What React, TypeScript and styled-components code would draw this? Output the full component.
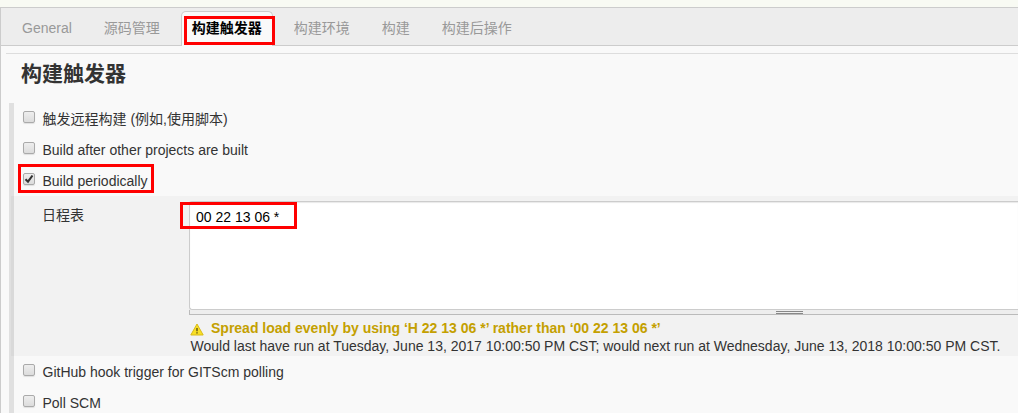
import React from 'react';
import styled, { createGlobalStyle, css } from 'styled-components';

const Global = createGlobalStyle`
  *, *::before { box-sizing: border-box; }
  html, body { margin: 0; height: 413px; overflow: hidden; }
  body {
    background: #f8faf3;
    color: #333;
    font: 14px/20px "Liberation Sans", "Noto Sans CJK SC", sans-serif;
  }
`;

const Page = styled.main`
  height: 413px;
  padding-top: 7px;
  overflow: hidden;
`;

const Panel = styled.div`
  height: 420px;
  border: solid #ccc;
  border-width: 1px 0 0 1px;
  background: #f9f9f9;
`;

const TabBar = styled.nav`
  display: flex;
  align-items: flex-end;
  height: 38px;
  padding: 0 10px;
  gap: 10px;
  background: #ededed;
  box-shadow: inset 0 -1px #ccc;
`;

const Tab = styled.a<{ $active?: boolean }>`
  position: relative;
  height: 35px;
  padding: 6px 10px 0;
  border: 1px solid transparent;
  border-bottom: 0;
  color: #999;
  white-space: nowrap;
  ${(p) =>
    p.$active &&
    css`
      border-color: #ccc;
      border-radius: 5px 5px 0 0;
      background: #f9f9f9;
      color: #000;
      font-weight: bold;
    `}
`;

const Mark = styled.span<{ $x: number; $y: number; $w: number; $h: number }>`
  position: absolute;
  z-index: 1;
  left: ${(p) => p.$x}px;
  top: ${(p) => p.$y}px;
  width: ${(p) => p.$w}px;
  height: ${(p) => p.$h}px;
  border: 3px solid #f00;
  pointer-events: none;
`;

const Content = styled.section`
  margin: 7px 0 0 5px;
  border-top: 1px solid #ddd;
`;

const Heading = styled.h1`
  height: 49px;
  margin: 0;
  padding: 5px 0 0 15px;
  font-size: 21px;
  line-height: 30px;
`;

const Options = styled.div`
  margin-left: 3px;
  border-left: 5px solid #e0e0e0;
`;

const Row = styled.label`
  position: relative;
  display: flex;
  height: 31px;
  padding: 6px 0 0 9px;
  gap: 7.5px;
`;

const CheckBox = styled.span`
  display: flex;
  width: 12px;
  height: 12px;
  margin-top: 2px;
  border: 1px solid #aaa;
  border-radius: 2px;
  background: linear-gradient(#eee, #dcdcdc);
  box-shadow: 0 1px 1px rgba(0, 0, 0, 0.1);
`;

const Schedule = styled.div`
  display: flex;
  height: 160px;
  margin-left: -3px;
  border-left: 3px solid #d9d9d9;
  background: #f2f2f2;
`;

const FieldName = styled.div`
  flex: 0 0 175px;
  padding: 9px 0 0 28px;
`;

const Field = styled.div`
  position: relative;
  flex: 1;
`;

const Editor = styled.div`
  height: 109px;
  margin-top: 5px;
  padding: 5px 6px 0;
  border: 1px solid #ccc;
  border-right: 0;
  border-radius: 3px 0 0 3px;
  background: #fff;
  box-shadow: inset 0 1px 1px rgba(0, 0, 0, 0.09);
  color: #000;
`;

const Grip = styled.div`
  display: flex;
  height: 5px;
  padding: 1px 0 0 586px;
  border: solid #bbb;
  border-width: 0 0 1px 1px;
  background: #eee;

  &::before {
    content: '';
    width: 27px;
    height: 3px;
    border: solid #888;
    border-width: 1px 0;
  }
`;

const Warning = styled.div`
  display: flex;
  height: 18px;
  margin-top: 4px;
  padding-left: 1px;
  gap: 7px;
  color: #c4a000;
  font-weight: bold;
  line-height: 18px;

  svg { margin-top: 4px; }
`;

const RunTimes = styled.div`
  padding-left: 1.5px;
  line-height: 18px;
  white-space: nowrap;
`;

const TABS = ['General', '源码管理', '构建触发器', '构建环境', '构建', '构建后操作'];

function Option({ text, checked }: { text: string; checked?: boolean }) {
  return (
    <Row>
      <CheckBox>
        {checked && (
          <svg width="10" height="10" viewBox="0 0 10 10">
            <path d="M1.5 5.2 4 7.7 8.5 1.5" fill="none" stroke="#333" strokeWidth="2.1" />
          </svg>
        )}
      </CheckBox>
      <span>{text}</span>
      {checked && <Mark $x={4} $y={-1} $w={136} $h={29} />}
    </Row>
  );
}

function WarningIcon() {
  return (
    <svg width="14" height="13" viewBox="0 0 14 13">
      <path d="M7 1 13.2 12H.8Z" fill="#f8df25" stroke="#d8ba18" strokeLinejoin="round" />
      <path d="M7 5v3.2M7 9.2v1.3" fill="none" stroke="#6b5a10" strokeWidth="1.5" />
    </svg>
  );
}

export default function App() {
  return (
    <>
      <Global />
      <Page>
        <Panel>
          <TabBar>
            {TABS.map((name, i) => (
              <Tab key={name} $active={i === 2}>
                {name}
                {i === 2 && <Mark $x={2} $y={4} $w={91} $h={29} />}
              </Tab>
            ))}
          </TabBar>
          <Content>
            <Heading>构建触发器</Heading>
            <Options>
              <Option text="触发远程构建 (例如,使用脚本)" />
              <Option text="Build after other projects are built" />
              <Option text="Build periodically" checked />
              <Schedule>
                <FieldName>日程表</FieldName>
                <Field>
                  <Editor>00 22 13 06 *</Editor>
                  <Grip />
                  <Mark $x={-9} $y={6} $w={117} $h={27} />
                  <Warning>
                    <WarningIcon />
                    <span>Spread load evenly by using ‘H 22 13 06 *’ rather than ‘00 22 13 06 *’</span>
                  </Warning>
                  <RunTimes>
                    Would last have run at Tuesday, June 13, 2017 10:00:50 PM CST; would next run at Wednesday, June 13, 2018 10:00:50 PM CST.
                  </RunTimes>
                </Field>
              </Schedule>
              <Option text="GitHub hook trigger for GITScm polling" />
              <Option text="Poll SCM" />
            </Options>
          </Content>
        </Panel>
      </Page>
    </>
  );
}
